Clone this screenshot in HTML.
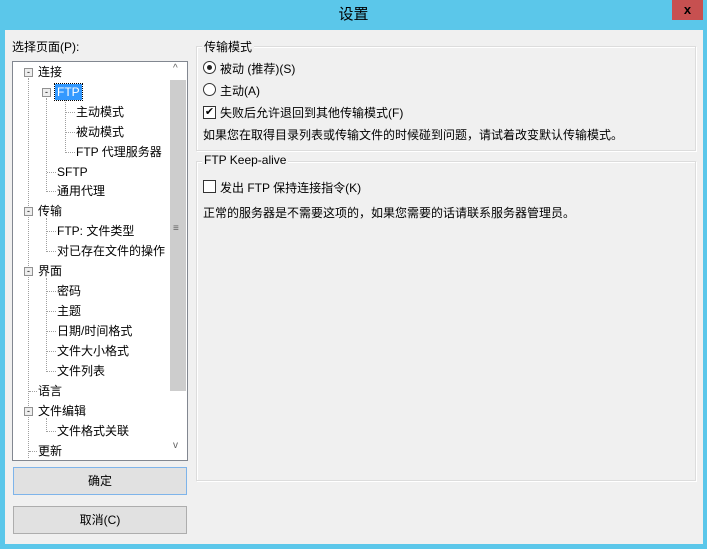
<!DOCTYPE html>
<html><head><meta charset="utf-8"><style>
*{margin:0;padding:0;box-sizing:border-box}
body{width:707px;height:549px;background:#5bc7ea;position:relative;overflow:hidden;font-family:"Liberation Sans","Noto Sans CJK SC",sans-serif;font-size:12px;color:#000}
.a{position:absolute;white-space:nowrap}
#title{left:0;top:0;width:707px;height:30px;text-align:center;line-height:30px;font-size:15px;color:#000}
#close{left:672px;top:0;width:31px;height:20px;background:#c75050;color:#000;text-align:center;font-weight:bold;font-size:13px;line-height:20px}
#body{left:5px;top:30px;width:698px;height:514px;background:#f0f0f0}
#tree{left:12px;top:61px;width:176px;height:400px;background:#fff;border:1px solid #828790}
#sb{left:169px;top:62px;width:18px;height:398px;background:#fff}
#thumb{left:170px;top:80px;width:16px;height:311px;background:#cdcdcd}
.t{position:absolute;line-height:16px}
.btn{border:1px solid #adadad;background:#e1e1e1;text-align:center;line-height:25px}
.grp{border:1px solid #dcdcdc;box-shadow:inset 1px 1px 0 #fff,1px 1px 0 #fff}
.gt{background:#f0f0f0;padding:0 2px}
.box{width:13px;height:13px;border:1px solid #333;background:#fff}
.exp{width:9px;height:9px;border:1px solid #919191;background:#eee;font-size:9px;line-height:6px;text-align:center}
.dot{border-left:1px dotted #a0a0a0}
.hd{border-top:1px dotted #a0a0a0;height:0}
</style></head><body>
<div class="a" id="title">设置</div>
<div class="a" id="close">x</div>
<div class="a" id="body"></div>
<div class="a" style="left:12px;top:38px">选择页面(P):</div>
<div class="a" id="tree"></div>
<div class="a" id="sb"></div>
<div class="a" id="thumb"></div>
<div class="a" style="left:173px;top:63px;font-size:10px;color:#606060">^</div>
<div class="a" style="left:173px;top:225px;font-size:10px;color:#606060;line-height:8px">≡</div>
<div class="a" style="left:173px;top:440px;font-size:10px;color:#606060">v</div>
<!-- tree lines -->
<div class="a dot" style="left:28px;top:78px;height:380px"></div>
<div class="a dot" style="left:46px;top:98px;height:94px"></div>
<div class="a dot" style="left:65px;top:98px;height:55px"></div>
<div class="a dot" style="left:46px;top:218px;height:34px"></div>
<div class="a dot" style="left:46px;top:278px;height:94px"></div>
<div class="a dot" style="left:46px;top:418px;height:14px"></div>
<div class="a exp" style="left:24px;top:68px">-</div>
<div class="a exp" style="left:42px;top:88px">-</div>
<div class="a exp" style="left:24px;top:207px">-</div>
<div class="a exp" style="left:24px;top:267px">-</div>
<div class="a exp" style="left:24px;top:407px">-</div>
<div class="a" style="left:38px;top:64px;line-height:16px">连接</div>
<div class="a" style="left:55px;top:84px;line-height:16px;background:#3399ff;color:#fff;padding:0 2px;outline:1px dotted #000">FTP</div>
<div class="a hd" style="left:66px;top:112px;width:9px"></div><div class="a" style="left:76px;top:104px;line-height:16px">主动模式</div>
<div class="a hd" style="left:66px;top:132px;width:9px"></div><div class="a" style="left:76px;top:124px;line-height:16px">被动模式</div>
<div class="a hd" style="left:66px;top:152px;width:9px"></div><div class="a" style="left:76px;top:144px;line-height:16px">FTP 代理服务器</div>
<div class="a hd" style="left:47px;top:172px;width:9px"></div><div class="a" style="left:57px;top:164px;line-height:16px">SFTP</div>
<div class="a hd" style="left:47px;top:191px;width:9px"></div><div class="a" style="left:57px;top:183px;line-height:16px">通用代理</div>
<div class="a" style="left:38px;top:203px;line-height:16px">传输</div>
<div class="a hd" style="left:47px;top:231px;width:9px"></div><div class="a" style="left:57px;top:223px;line-height:16px">FTP: 文件类型</div>
<div class="a hd" style="left:47px;top:251px;width:9px"></div><div class="a" style="left:57px;top:243px;line-height:16px">对已存在文件的操作</div>
<div class="a" style="left:38px;top:263px;line-height:16px">界面</div>
<div class="a hd" style="left:47px;top:291px;width:9px"></div><div class="a" style="left:57px;top:283px;line-height:16px">密码</div>
<div class="a hd" style="left:47px;top:311px;width:9px"></div><div class="a" style="left:57px;top:303px;line-height:16px">主题</div>
<div class="a hd" style="left:47px;top:331px;width:9px"></div><div class="a" style="left:57px;top:323px;line-height:16px">日期/时间格式</div>
<div class="a hd" style="left:47px;top:351px;width:9px"></div><div class="a" style="left:57px;top:343px;line-height:16px">文件大小格式</div>
<div class="a hd" style="left:47px;top:371px;width:9px"></div><div class="a" style="left:57px;top:363px;line-height:16px">文件列表</div>
<div class="a hd" style="left:29px;top:391px;width:8px"></div><div class="a" style="left:38px;top:383px;line-height:16px">语言</div>
<div class="a" style="left:38px;top:403px;line-height:16px">文件编辑</div>
<div class="a hd" style="left:47px;top:431px;width:9px"></div><div class="a" style="left:57px;top:423px;line-height:16px">文件格式关联</div>
<div class="a hd" style="left:29px;top:451px;width:8px"></div><div class="a" style="left:38px;top:443px;line-height:16px">更新</div>
<div class="a btn" style="left:13px;top:467px;width:174px;height:28px;border-color:#7eb4ea;line-height:26px">确定</div>
<div class="a btn" style="left:13px;top:506px;width:174px;height:28px;line-height:26px">取消(C)</div>
<!-- right -->
<div class="a grp" style="left:196px;top:46px;width:500px;height:105px"></div>
<div class="a gt" style="left:202px;top:38px">传输模式</div>
<div class="a" style="left:203px;top:61px;width:13px;height:13px;border:1px solid #333;border-radius:50%;background:#fff"><div style="margin:3px;width:5px;height:5px;border-radius:50%;background:#222"></div></div>
<div class="a" style="left:220px;top:60px">被动 (推荐)(S)</div>
<div class="a" style="left:203px;top:83px;width:13px;height:13px;border:1px solid #333;border-radius:50%;background:#fff"></div>
<div class="a" style="left:220px;top:82px">主动(A)</div>
<div class="a box" style="left:203px;top:106px;font-size:11px;line-height:11px;text-align:center">✔</div>
<div class="a" style="left:220px;top:104px">失败后允许退回到其他传输模式(F)</div>
<div class="a" style="left:203px;top:126px">如果您在取得目录列表或传输文件的时候碰到问题，请试着改变默认传输模式。</div>
<div class="a grp" style="left:196px;top:161px;width:500px;height:320px"></div>
<div class="a gt" style="left:202px;top:153px">FTP Keep-alive</div>
<div class="a box" style="left:203px;top:180px"></div>
<div class="a" style="left:220px;top:179px">发出 FTP 保持连接指令(K)</div>
<div class="a" style="left:203px;top:204px">正常的服务器是不需要这项的，如果您需要的话请联系服务器管理员。</div>
</body></html>
